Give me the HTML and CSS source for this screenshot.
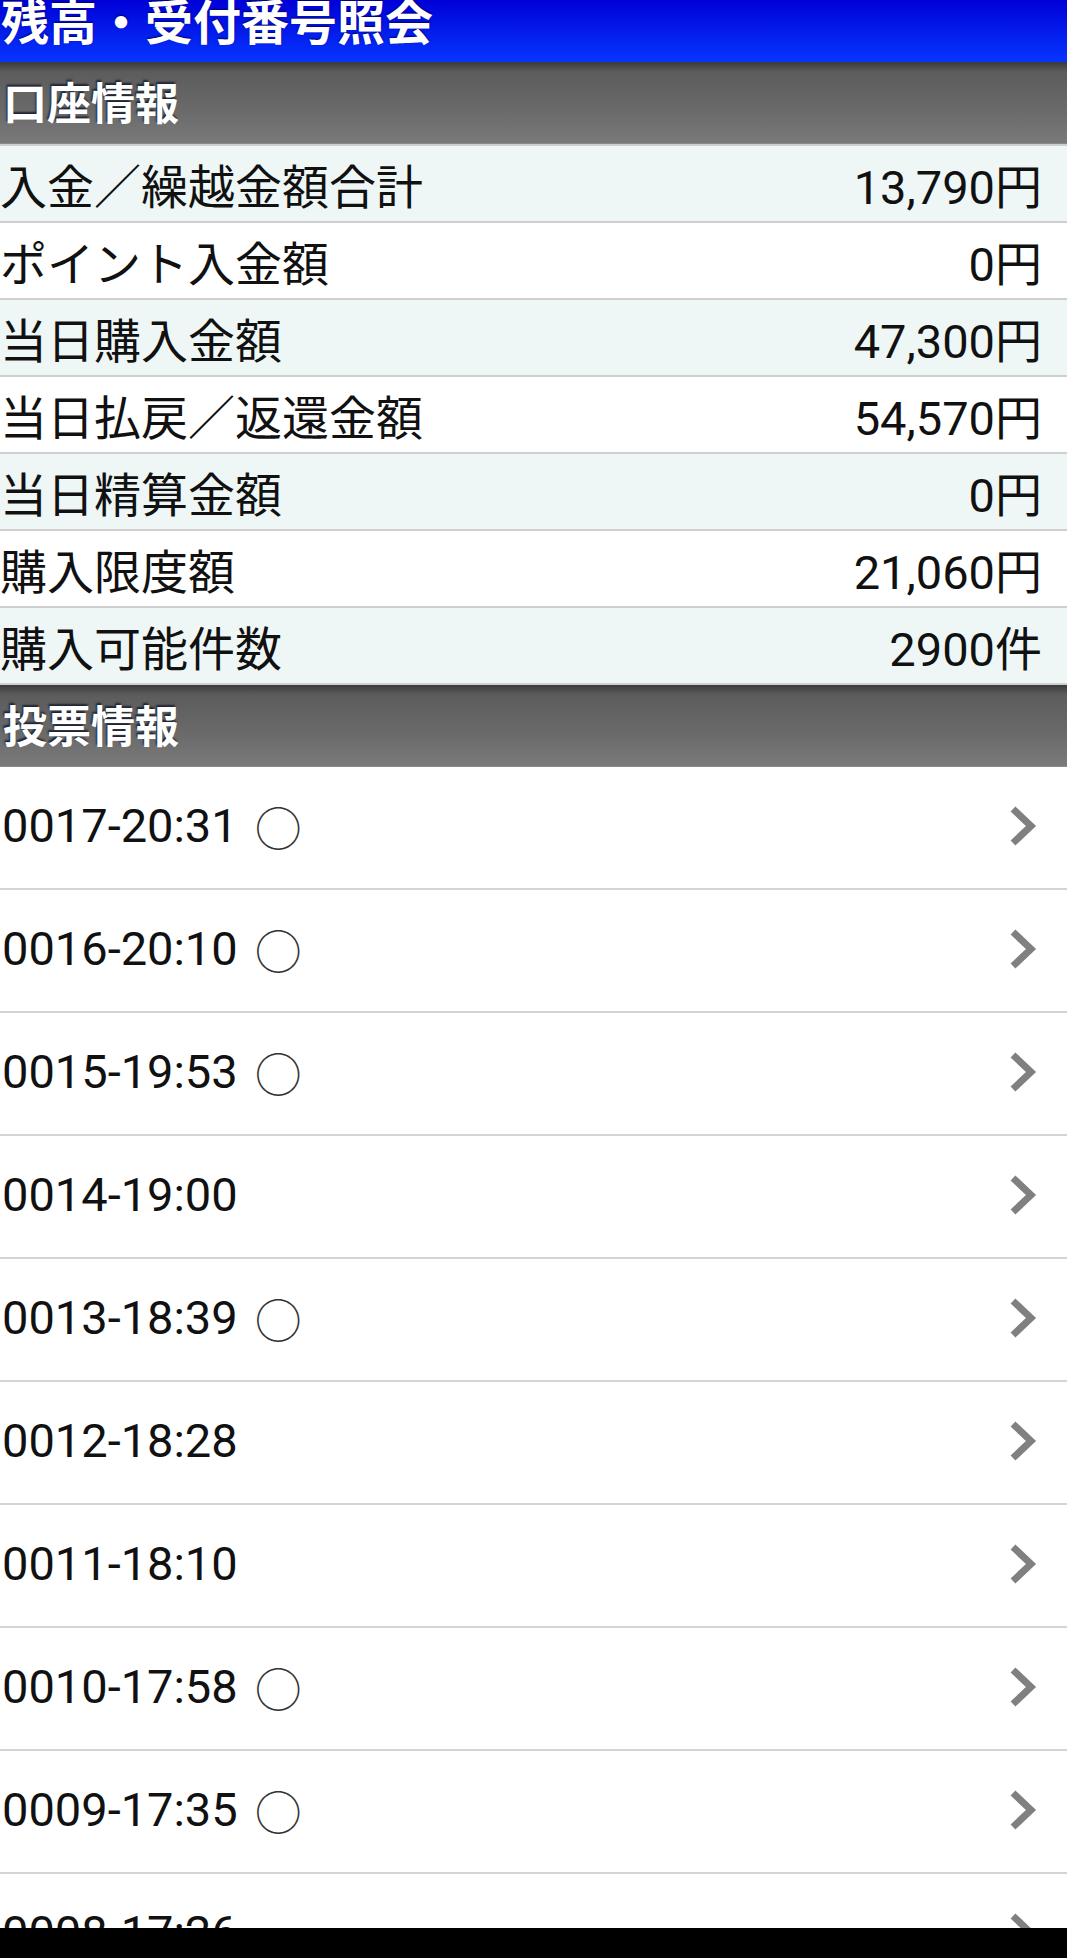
FILE: index.html
```html
<!DOCTYPE html>
<html lang="ja">
<head>
    <meta charset="UTF-8" />
    <meta name="viewport" content="width=device-width, initial-scale=1.0"/>
    <title>残高・受付番号照会</title>
    <link rel="stylesheet" href="styles.css">
</head>
<body>
<div class="page">
    <header class="titlebar">
        <h1>残高・受付番号照会</h1>
    </header>

    <h2 class="bar">口座情報</h2>
    <ul class="summary">
        <li><span>入金／繰越金額合計</span><span>13,790円</span></li>
        <li><span>ポイント入金額</span><span>0円</span></li>
        <li><span>当日購入金額</span><span>47,300円</span></li>
        <li><span>当日払戻／返還金額</span><span>54,570円</span></li>
        <li><span>当日精算金額</span><span>0円</span></li>
        <li><span>購入限度額</span><span>21,060円</span></li>
        <li><span>購入可能件数</span><span>2900件</span></li>
    </ul>

    <h2 class="bar">投票情報</h2>
    <ul class="votes">
        <li><a href="#">0017-20:31 <span class="mark">○</span></a></li>
        <li><a href="#">0016-20:10 <span class="mark">○</span></a></li>
        <li><a href="#">0015-19:53 <span class="mark">○</span></a></li>
        <li><a href="#">0014-19:00</a></li>
        <li><a href="#">0013-18:39 <span class="mark">○</span></a></li>
        <li><a href="#">0012-18:28</a></li>
        <li><a href="#">0011-18:10</a></li>
        <li><a href="#">0010-17:58 <span class="mark">○</span></a></li>
        <li><a href="#">0009-17:35 <span class="mark">○</span></a></li>
        <li><a href="#">0008-17:26</a></li>
    </ul>
</div>
<div class="navbar"></div>

<script>
    // 矢印アイコンを各行に追加
    document.querySelectorAll('.votes a').forEach((a) => {
      a.insertAdjacentHTML('beforeend',
        '<svg class="arrow" width="30" height="44" viewBox="0 0 30 44">' +
        '<polyline points="6,5 24,22 6,39" fill="none" stroke="#808080" stroke-width="7"/></svg>');
    });
</script>
</body>
</html>
```

FILE: styles.css
```css
html, body {
  margin: 0;
  overflow: hidden;
}

body {
  background-color: #fff;
  color: #111;
  font-family: Roboto, "Noto Sans CJK JP", sans-serif;
}

.titlebar {
  height: 62px;
  overflow: hidden;
  background: linear-gradient(#0000d8, #0636ff);
}

.titlebar h1 {
  margin: 0;
  padding-left: 1px;
  font-size: 48px;
  line-height: 47px;
  font-weight: bold;
  color: #fff;
  text-shadow: 0 -1px 2px #000060;
}

.bar {
  margin: 0;
  height: 78px;
  padding: 0 0 3px 3px;
  display: flex;
  align-items: center;
  font-size: 44px;
  font-weight: bold;
  color: #fff;
  text-shadow: -1px -2px 2px #1c2230;
  background: linear-gradient(#3a3a3a, #5c5c5c 12%, #6a6a6a 60%, #7a7a7a);
  border-bottom: 1px solid #8a8a8a;
}

ul {
  list-style: none;
  margin: 0;
  padding: 0;
}

.summary {
  border-top: 2px solid #cfcfcf;
}

.summary li {
  height: 75px;
  display: flex;
  align-items: center;
  justify-content: space-between;
  padding: 0 25px 0 0;
  font-size: 47px;
  border-bottom: 2px solid #cfcfcf;
  background-color: #fff;
}

.summary li:nth-child(odd) {
  background-color: #eef7f6;
}

.votes li {
  border-bottom: 2px solid #d4d4d4;
}

.votes a {
  box-sizing: border-box;
  height: 121px;
  display: flex;
  align-items: center;
  padding: 0 30px 4px 2px;
  font-size: 47px;
  color: #111;
  text-decoration: none;
}

.mark {
  margin-left: 17px;
  font-weight: 300;
  color: #333;
}

.arrow {
  margin-left: auto;
}

.navbar {
  position: fixed;
  left: 0;
  right: 0;
  bottom: 0;
  height: 30px;
  background-color: #000;
}
```
